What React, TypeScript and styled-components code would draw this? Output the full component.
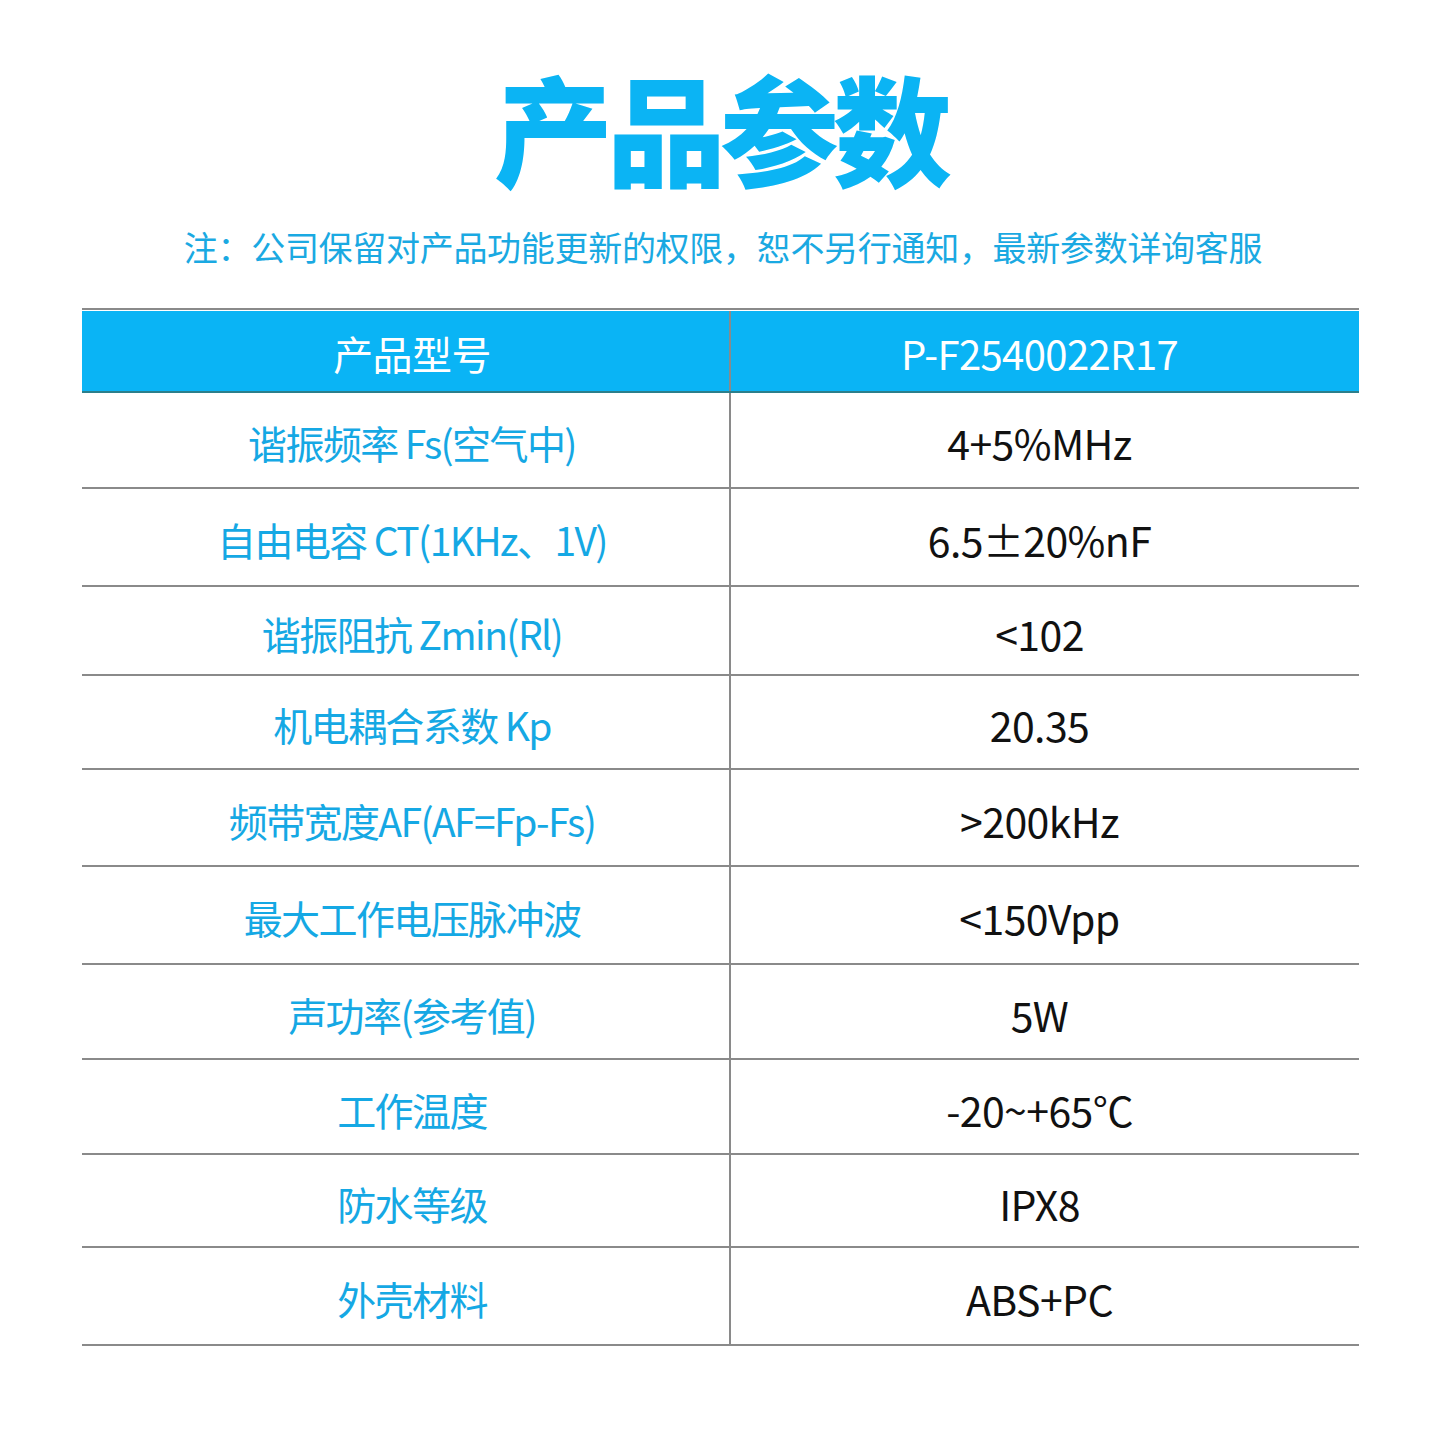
import React from 'react'
import styled, {createGlobalStyle} from 'styled-components'

const GlobalStyle = createGlobalStyle`
  html, body {
    margin: 0;
    padding: 0;
    background: #ffffff;
  }
  body {
    font-family: "Noto Sans CJK SC", "Noto Sans", sans-serif;
  }
`

interface Spec {
  label: string
  value: string
  height: number
}

const specs: Spec[] = [
  {label: '谐振频率 Fs(空气中)', value: '4+5%MHz', height: 96},
  {label: '自由电容 CT(1KHz、1V)', value: '6.5±20%nF', height: 98},
  {label: '谐振阻抗 Zmin(Rl)', value: '<102', height: 89},
  {label: '机电耦合系数 Kp', value: '20.35', height: 94},
  {label: '频带宽度AF(AF=Fp-Fs)', value: '>200kHz', height: 97},
  {label: '最大工作电压脉冲波', value: '<150Vpp', height: 98},
  {label: '声功率(参考值)', value: '5W', height: 95},
  {label: '工作温度', value: '-20~+65°C', height: 95},
  {label: '防水等级', value: 'IPX8', height: 93},
  {label: '外壳材料', value: 'ABS+PC', height: 98},
]

const Page = styled.div`
  width: 1440px;
  height: 1440px;
  display: flex;
  flex-direction: column;
  align-items: center;
  box-sizing: border-box;
  padding-top: 48px;
`

const Title = styled.h1`
  margin: 0;
  font-family: "Noto Sans CJK SC", sans-serif;
  font-weight: 900;
  font-size: 119px;
  line-height: 156px;
  letter-spacing: -6px;
  color: #0bb4f4;
`

const Note = styled.p`
  margin: 18px 0 0 6px;
  font-size: 34px;
  line-height: 50px;
  letter-spacing: -0.3px;
  color: #1aa9e2;
`

const Table = styled.div`
  margin-top: 36px;
  width: 1277px;
  border-top: 2px solid #8a8a8a;
  display: flex;
  flex-direction: column;
`

const Row = styled.div<{$header?: boolean}>`
  display: grid;
  grid-template-columns: 647px 1fr;
  box-sizing: border-box;
  background: ${({$header}) => ($header ? '#0ab4f5' : 'transparent')};
  border-bottom: 2px solid ${({$header}) => ($header ? '#2c7f8c' : '#8a8a8a')};
  margin-top: ${({$header}) => ($header ? '1px' : '0')};
`

const Cell = styled.div<{$header?: boolean; $value?: boolean}>`
  display: flex;
  align-items: center;
  justify-content: center;
  padding-top: 4px;
  font-size: ${({$header}) => ($header ? '40px' : '39px')};
  letter-spacing: ${({$value, $header}) => ($value || $header ? '-0.6px' : '-1.6px')};
  font-weight: 400;
  color: ${({$header, $value}) => ($header ? '#ffffff' : $value ? '#111111' : '#15a8e4')};
  padding-left: ${({$value}) => ($value ? '0' : '14px')};
  padding-right: ${({$value}) => ($value ? '10px' : '0')};
  & + & {
    border-left: 2px solid ${({$header}) => ($header ? '#2c7f8c' : '#8a8a8a')};
  }
`

const ValueCell = styled(Cell)`
  font-size: ${({$header}) => ($header ? '40px' : '41px')};
`

export default function App() {
  return (
    <Page>
      <GlobalStyle />
      <Title>产品参数</Title>
      <Note>注：公司保留对产品功能更新的权限，恕不另行通知，最新参数详询客服</Note>
      <Table>
        <Row $header style={{height: 82}}>
          <Cell $header>产品型号</Cell>
          <ValueCell $header $value>P-F2540022R17</ValueCell>
        </Row>
        {specs.map((s) => (
          <Row key={s.label} style={{height: s.height}}>
            <Cell>{s.label}</Cell>
            <ValueCell $value>{s.value}</ValueCell>
          </Row>
        ))}
      </Table>
    </Page>
  )
}
